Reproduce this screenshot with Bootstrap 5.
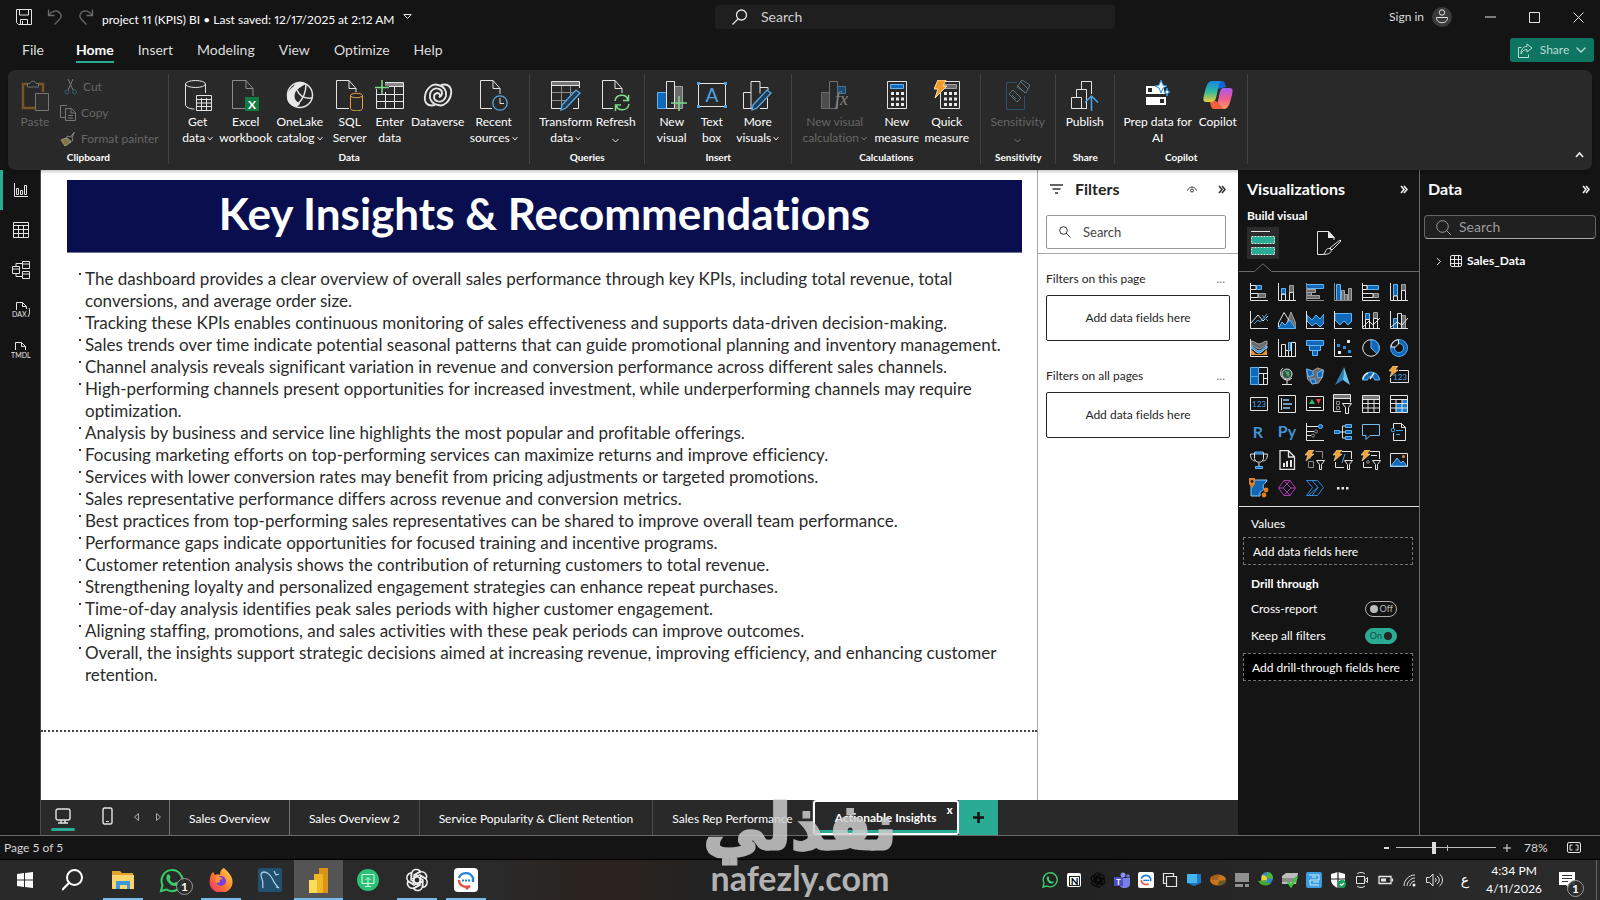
<!DOCTYPE html>
<html lang="en">
<head>
<meta charset="utf-8">
<meta name="viewport" content="width=device-width, initial-scale=1">
<title>project 11 (KPIS) BI</title>
<link rel="stylesheet" href="https://cdn.jsdelivr.net/npm/bootstrap@5.3.0/dist/css/bootstrap.min.css">
<style>
:root{--chrome:#141414;--ribbon:#292929;--accent:#2aac94;--line:#6a6a6a}
body{font-family:Lato,"Noto Sans",sans-serif;font-variant-ligatures:none;font-size:12px;line-height:16px;background:var(--chrome);color:#fff;min-height:100vh}
button,input{font:inherit;font-variant-ligatures:none;color:inherit}
button{background:none;border:0;padding:0}
svg{display:block;flex:none}
h1,h2,h3,p{margin:0}
.ln{fill:none;stroke:#e4e4e4}
.bl{fill:#0f68b8;stroke:#62b4f4}
.bo{fill:none;stroke:#4ea3e4}
.gr{fill:#6b6b6b;stroke:#a2a2a2}
.go{fill:none;stroke:#8d8d8d}
.wf{fill:#e8e8e8}

/* title bar */
.titlebar{height:34px}
.titlebar .before{flex:715 1 0}
.titlebar .after{flex:485 1 0}
.quick{gap:15px;padding:0 8px 0 16px}
.doc-name{padding-top:6px}
.doc-name,.clock{font-variant-numeric:proportional-nums}
.find{width:400px;height:24px;background:#1f1f1f;border-radius:3px;padding:0 17px;gap:11px}
.find input{background:none;border:0;outline:0;font-size:14px;color:#d0d0d0}
.find input::placeholder{color:#d0d0d0;opacity:1}
.winbtn{width:44px;height:34px}

/* menu */
.menu{height:36px;padding-left:22px;padding-right:6px}
.menu a{color:#dcdcdc;text-decoration:none;font-size:14px;line-height:20px;padding:6px 0 1px;border-bottom:2px solid transparent;height:29px}
.menu a.on{color:#fff;font-weight:700;border-color:var(--accent)}
.share{background:#0e7562;color:#b8dcd4;border-radius:3px;width:84px;height:24px;margin-top:4px;gap:7px}

/* ribbon */
.ribbon{background:var(--ribbon);border-radius:7px;height:100px;margin:0 8px;position:relative;z-index:2;box-shadow:0 2px 3px #0003}
.rgroup{padding:0 7px 0 6px;position:relative}
.rgroup::after{content:"";position:absolute;right:0;top:4px;bottom:6px;width:1px;background:#414141}
.rgroup h2{font-size:10px;line-height:14px;font-weight:700;position:absolute;left:0;right:0;bottom:6px;text-align:center}
.g-clip{padding-right:10px}
.g-data{padding-right:9px}
.g-query{padding-left:9px;padding-right:6px}
.g-calc{padding-right:9px}
.rbtn{display:flex;flex-direction:column;align-items:center;padding-top:10px;height:80px;line-height:16px;white-space:nowrap}
.rbtn svg{margin-bottom:3px}
.rbtn svg.cv,.cv{display:inline-block;margin:0 0 1px 2px}
.col38{width:38px}.col42{width:42px}.col46{width:46px}.col50{width:50px}.col54{width:54px}.col58{width:58px}.col62{width:62px}.col74{width:74px}
.dim{color:#666}
.small-cmd{gap:5px;color:#666;height:26px}

/* work area */
.rail{width:41px;border-right:1px solid #4a4a4a}
.rail button{width:40px;height:40px;border-left:3px solid transparent;padding:0 2px 0 0}
.rail button.on{border-color:var(--accent)}
.report{background:#fff;color:#2b2b2b;min-width:0}
.banner{background:#090f4e;color:#fff;margin:10px 15px 0 26px;height:73px;border-bottom:1px solid #6b6f9a;font-size:44px;line-height:66px;font-weight:700;text-align:center}
.insights{list-style:none;margin:15px 20px 0 37px;padding:0;font-size:17px;line-height:22px}
.insights li{padding-left:7px;position:relative}
.insights li::before{content:"";position:absolute;left:1px;top:5px;width:2px;height:2px;background:#333}
.page-edge{border-top:2px dotted #444;margin-bottom:68px}
.filters{width:201px;background:#fff;color:#252423;border-left:1px solid #a8a8a8}
.filters .top{border-bottom:1px solid #a8a8a8;height:84px;padding:9px 12px 0 8px}
.filters h2,.pane h2{font-size:16px;line-height:20px;font-weight:700}
.fsearch{border:1px solid #999;border-radius:2px;height:34px;margin-top:16px;padding:0 12px;gap:10px;width:180px}
.fsearch input{border:0;outline:0;width:100%;background:none;font-size:13px}
.fsearch input::placeholder{color:#444;opacity:1}
.drop{border:1px solid #252423;border-radius:2px;height:46px;width:184px}
.pane{width:182px;border-right:1px solid var(--line)}
.pane.data{width:180px}
.tiles{display:grid;grid-template-columns:repeat(6,28px);grid-auto-rows:28px;padding:5px 0 4px 6px;border-bottom:1px solid #e0e0e0}
.tiles button{display:flex;align-items:center;justify-content:center}
.well{border:1px dashed #767676;height:28px;line-height:28px;margin:0 6px 0 4px;white-space:nowrap}
.switch-box{position:relative;width:32px;height:16px}
.switch-box input{appearance:none;display:block;margin:0;width:32px;height:16px;border:1px solid #b0b0b0;border-radius:8px}
.switch-box input::before{content:"";display:block;width:8px;height:8px;border-radius:4px;background:#bdbdbd;margin:3px 0 0 4px}
.switch-box input:checked{background:var(--accent);border-color:var(--accent)}
.switch-box input:checked::before{background:#252525;margin-left:18px}
.switch-box span{position:absolute;font-size:9px;line-height:16px;top:0;right:4px;color:#bdbdbd;pointer-events:none}
.switch-box input:checked+span{right:15px;color:#114d43}
.dsearch{height:24px;border:1px solid #666;border-bottom-color:#aaa;border-radius:4px;background:#202020;margin:16px 4px 0;padding:0 11px;gap:6px}
.dsearch input{border:0;outline:0;background:none;width:120px;font-size:14px}
.dsearch input::placeholder{color:#9c9c9c;opacity:1}

/* page tabs */
.sheets{background:var(--ribbon);height:35px}
.sheets .tab{border-right:1px solid #4d4d4d;height:35px;padding:3px 19px 0;white-space:nowrap}
.sheets .tab.on{border:2px solid #fff;border-radius:3px;box-shadow:inset 0 -3px var(--accent);font-weight:700;padding:0 18px;position:relative;width:146px}
.sheets .tab.on b{position:absolute;right:4px;top:0;font-size:11px}
.addtab{background:var(--accent);width:39px;color:#111}
.view{width:44px;height:35px;position:relative}
.view.on::after{content:"";position:absolute;left:10px;right:10px;bottom:4px;height:3px;border-radius:2px;background:var(--accent)}
.status{height:25px;border-top:1px solid var(--line);border-bottom:1px solid #000;background:var(--chrome);color:#d6d6d6}
.zoomer{appearance:none;width:100px;height:12px;margin:0 7px;background:linear-gradient(#bbb,#bbb) 51px 3px/1px 6px no-repeat,linear-gradient(#bbb,#bbb) 0 5px/100% 1px no-repeat}
.zoomer::-webkit-slider-thumb{appearance:none;width:4px;height:12px;background:#ddd}

/* task bar */
.taskbar{height:40px;background:linear-gradient(90deg,#292929,#2a2a2a 31%,#2a231f 36%,#2a231f 40%,#222 44%,#222 62%,#2b2b2b)}
.taskbar .app{width:49px;height:40px;position:relative;display:flex;align-items:center;justify-content:center}
.taskbar .run::after{content:"";position:absolute;left:5px;right:4px;bottom:0;height:2px;background:#76b9ed}
.taskbar .now{background:#545454}
.taskbar .now::after{left:0;right:0}
.tray{gap:8px}
.bubble{position:absolute;width:17px;height:17px;border:1px solid #9a9a9a;border-radius:9px;background:#2b2b2be6;font-size:12px;line-height:15px;text-align:center;font-weight:700}
.clock{line-height:18px;width:62px;text-align:center}

.watermark{position:absolute;left:700px;top:788px;width:200px;color:#ccc;opacity:.85;text-align:center;z-index:9;pointer-events:none;font-weight:700}
.watermark .ar{font:700 63px/80px "DejaVu Sans",sans-serif;height:70px;white-space:nowrap;-webkit-text-stroke:3px #ccc}
.watermark .en{font-size:34px;line-height:40px;height:40px}
</style>
</head>
<body class="d-flex flex-column position-relative overflow-hidden">

<header>
  <div class="titlebar d-flex align-items-center">
    <div class="before d-flex align-items-center">
      <div class="quick d-flex">
        <button aria-label="Save"><svg width="16" height="16"><path class="ln" d="M.5.5h15v15h-13l-2-2zM4.500 15.500v-5h7v5M3.500.5v5.500h9v-5.500M6.500 15v-3"/></svg></button>
        <button aria-label="Undo"><svg width="16" height="16"><path fill="none" stroke="#6a6a6a" stroke-width="1.300" d="M1.500.5v6h6M1.500 6.500C5 1.500 10 1 12.500 3.500s2 5-.5 7.500l-4.500 4.500"/></svg></button>
        <button aria-label="Redo"><svg width="16" height="16"><path fill="none" stroke="#6a6a6a" stroke-width="1.300" d="M14.500.5v6h-6M14.500 6.500C11 1.500 6 1 3.500 3.500s-2 5 .5 7.500l4.500 4.500"/></svg></button>
      </div>
      <span class="doc-name">project 11 (KPIS) BI • Last saved: 12/17/2025 at 2:12 AM</span>
      <button aria-label="File details" class="ms-2"><svg width="9" height="6"><path class="ln" d="M.8.5h7.400l-3.700 4z"/></svg></button>
    </div>
    <label class="find d-flex align-items-center">
      <svg width="16" height="16"><circle class="ln" stroke-width="1.300" cx="9.500" cy="6" r="5"/><path class="ln" stroke-width="1.300" d="M6 10l-5.500 5.500"/></svg>
      <input type="text" placeholder="Search" aria-label="Search">
    </label>
    <div class="after d-flex align-items-center justify-content-end">
      <a href="#" class="text-decoration-none me-2" style="color:#dcdcdc">Sign in</a>
      <svg class="me-3" width="20" height="20"><circle cx="10" cy="10" r="10" fill="#3b3b3b"/><circle class="ln" cx="10" cy="5.500" r="2.700"/><path class="ln" d="M4.500 10.500h11c.5 7-11.500 7-11 0z"/></svg>
      <button class="winbtn d-flex align-items-center justify-content-center" aria-label="Minimize"><svg width="11" height="2"><path class="ln" d="M0 1h11"/></svg></button>
      <button class="winbtn d-flex align-items-center justify-content-center" aria-label="Maximize"><svg width="11" height="11"><path class="ln" d="M.5.5h10v10h-10z"/></svg></button>
      <button class="winbtn d-flex align-items-center justify-content-center" aria-label="Close"><svg width="11" height="11"><path class="ln" d="M.5.5l10 10M10.500.5l-10 10"/></svg></button>
    </div>
  </div>
  <nav class="menu d-flex">
    <a href="#" class="me-3">File</a><a href="#" class="on ms-3">Home</a><a href="#" class="ms-4">Insert</a><a href="#" class="ms-4">Modeling</a><a href="#" class="ms-4">View</a><a href="#" class="ms-4">Optimize</a><a href="#" class="ms-4">Help</a>
    <button class="share d-flex align-items-center justify-content-center ms-auto"><svg width="15" height="15"><path fill="none" stroke="#b8dcd4" d="M3.500 4.500h-3v10h10v-3M9 1l5 4-5 4V6.500C6 6.500 4 8 3 11c0-4.500 2-7.500 6-7.500z"/></svg>Share<svg width="10" height="6"><path fill="none" stroke="#b8dcd4" stroke-width="1.300" d="M.5.5L5 5 9.500.5"/></svg></button>
  </nav>
</header>

<section class="ribbon d-flex" aria-label="Home ribbon">
  <div class="rgroup g-clip d-flex dim">
    <button class="rbtn dim col42"><svg width="29" height="31"><path d="M7 4H2v24h12M17 4h5v8" fill="none" stroke="#7a5427" stroke-width="2.500"/><path d="M6.500 7V3.500H9c.5-3 5.500-3 6 0h2.500V7z" fill="none" stroke="#707070"/><path d="M14.500 13.500h13v17h-13z" fill="#2e2e2e" stroke="#777"/></svg>Paste</button>
    <div class="ps-1">
      <button class="small-cmd d-flex align-items-center mt-1"><svg width="14" height="16" class="ms-1"><path d="M4 0l5 11M9 0L4 11" fill="none" stroke="#808080"/><circle cx="3" cy="13" r="2" fill="none" stroke="#326078"/><circle cx="10.500" cy="13" r="2" fill="none" stroke="#326078"/></svg>Cut</button>
      <button class="small-cmd d-flex align-items-center"><svg width="16" height="16"><path d="M5 12.500H.5v-12H7M5.500 3.500h6l4 4v8h-10zM11 4v4h4M8 10.500h5M8 13h5" fill="none" stroke="#777"/></svg>Copy</button>
      <button class="small-cmd d-flex align-items-center"><svg width="16" height="16"><path d="M14.500 1l-4 5-3-1-1 1.500 5 4L13 9l-1-2.500z" fill="none" stroke="#888"/><path d="M6 7L1 9l4 6 6-4z" fill="#857544" stroke="#9b9b7b"/></svg>Format painter</button>
    </div>
    <h2 class="text-white">Clipboard</h2>
  </div>
  <div class="rgroup g-data d-flex">
    <button class="rbtn col46"><svg width="28" height="31"><ellipse class="ln" cx="11.500" cy="4" rx="10" ry="3.500"/><path class="ln" d="M1.500 4v21c0 2 4 4 9 4M21.500 4v9"/><path d="M12 14.500h16v16H12z" fill="#292929"/><path class="ln" d="M12.500 15.500h15v15h-15zM12.500 19.500h15M12.500 23h15M12.500 26.500h15M17.500 18v12M22.500 18v12"/></svg><span>Get</span><span>data<svg class="cv" width="6" height="5"><path class="ln" d="M.5 1L3 4l2.500-3"/></svg></span></button>
    <button class="rbtn col50"><svg width="27" height="31"><path class="go" d="M13 28.500H.5V.5H14l7 8V16M14 .5v8h7"/><path fill="#107c41" d="M13 17h14v14H13z"/><text x="20" y="28.500" text-anchor="middle" font-size="12" font-weight="700" fill="#fff">X</text></svg><span>Excel</span><span>workbook</span></button>
    <button class="rbtn col58"><svg width="28" height="31"><circle class="ln" stroke-width="1.500" cx="14" cy="15" r="12.500"/><path class="wf" d="M20 4C15 0 9 2 8 6c-8 5-9 15-3 19 4 3 9 1 9-2-6-1-7-9-3-13 2-2 5-4 9-6z"/><path class="ln" stroke-width="1.500" d="M11 10c2 5 6 9 15 8M20 4c0 8-2 14-8 20"/></svg><span>OneLake</span><span>catalog<svg class="cv" width="6" height="5"><path class="ln" d="M.5 1L3 4l2.500-3"/></svg></span></button>
    <button class="rbtn col42"><svg width="28" height="31"><path class="ln" d="M13 28.500H.5V.5H13l7 8V12M13 .5v8h7"/><path d="M14.500 15.500v13c0 3 12 3 12 0v-13" fill="#292929" stroke="#e8a04c"/><ellipse cx="20.500" cy="15.500" rx="6" ry="2.200" fill="#292929" stroke="#e8a04c"/></svg><span>SQL</span><span>Server</span></button>
    <button class="rbtn col38"><svg width="29" height="31"><path fill="#888" d="M10 2h18v4H10z"/><path class="ln" d="M1.500 9v19.500h27V2.500H10M1.500 14.500h27M1.500 21.500h27M10.500 12v16.500M19.500 7v21.500M14 6.500h14"/><path fill="none" stroke="#7ddc8a" stroke-width="1.500" d="M7 0v14M0 7.500h14"/></svg><span>Enter</span><span>data</span></button>
    <button class="rbtn col58"><svg width="30" height="31"><g class="ln" stroke-width="1.900"><path d="M12 25C4 27 1 22 2 16 3 9 9 3 15 5c6 1 9 6 8 11-1 4-5 7-9 5-4-1-4-7 0-8 3 0 4 3 2 4"/><path d="M18 5c8-2 11 3 10 9-1 7-7 13-13 11-6-1-9-6-8-11 1-4 5-7 9-5 4 1 4 7 0 8"/></g></svg><span>Dataverse</span></button>
    <button class="rbtn col54"><svg width="28" height="31"><path class="ln" d="M12 28.500H.5V.5H13l7 8V14M13 .5v8h7"/><circle cx="20" cy="23" r="7.200" fill="#292929" stroke="#5aa9e2" stroke-width="1.300"/><path class="ln" d="M20 18v5.500h4"/></svg><span>Recent</span><span>sources<svg class="cv" width="6" height="5"><path class="ln" d="M.5 1L3 4l2.500-3"/></svg></span></button>
    <h2>Data</h2>
  </div>
  <div class="rgroup g-query d-flex">
    <button class="rbtn col54"><svg width="30" height="31"><path fill="#777" d="M1 1h27v4H1z"/><path class="go" d="M1 12.500h24M1 20.500h20M10.500 5v23M19.500 5v18"/><path class="ln" d="M28.500 8V1.500H.5v27h10M.5 5.500h28M27.500 18v10.500H22"/><path d="M11 25L25 10l4 3-14 15-5 2z" fill="#1d3f5c" stroke="#5aa9e2" stroke-width="1.300"/></svg><span>Transform</span><span>data<svg class="cv" width="6" height="5"><path class="ln" d="M.5 1L3 4l2.500-3"/></svg></span></button>
    <button class="rbtn col46"><svg width="28" height="31"><path class="ln" d="M11 28.500H.5V.5H13l7 8V13M13 .5v8h7"/><path d="M13 21c1-7 11-8 13-1M26.500 15v5.500H21M27 24c-1 7-11 8-13 1M13.500 31v-6H19" fill="none" stroke="#7ddc8a" stroke-width="1.500"/></svg><span>Refresh</span><svg class="mt-2" width="7" height="5"><path class="ln" d="M.5 1l3 3 3-3"/></svg></button>
    <h2>Queries</h2>
  </div>
  <div class="rgroup d-flex">
    <button class="rbtn col42"><svg width="30" height="31"><path class="bl" d="M.5 12.500h9v16h-9z"/><path class="gr" d="M17.500 6.500h8v22h-8z"/><path d="M9.500 1.500h8v27h-8z" fill="#292929" stroke="#e4e4e4"/><path fill="none" stroke="#7ddc8a" stroke-width="1.500" d="M22 16v15M14 23h16"/></svg><span>New</span><span>visual</span></button>
    <button class="rbtn col38"><svg width="32" height="31"><path class="ln" d="M2.500 3.500h27v23h-27z"/><path fill="#4ea3e4" d="M1 2h3v3H1zM28 2h3v3h-3zM1 25h3v3H1zM28 25h3v3h-3z"/><text x="16" y="22" text-anchor="middle" font-size="19" fill="#4ea3e4">A</text></svg><span>Text</span><span>box</span></button>
    <button class="rbtn col54"><svg width="30" height="31"><path class="ln" d="M8 12.500H.5v16H8V1.500h9v12M17 7.500h8V10M24.500 18v10.500H17M8 28.500h4"/><path d="M10 25L24 10l4 3-14 15-5 2z" fill="#1d3f5c" stroke="#5aa9e2" stroke-width="1.300"/></svg><span>More</span><span>visuals<svg class="cv" width="6" height="5"><path class="ln" d="M.5 1L3 4l2.500-3"/></svg></span></button>
    <h2>Insert</h2>
  </div>
  <div class="rgroup g-calc d-flex">
    <button class="rbtn dim col74"><svg width="30" height="31" opacity=".55"><path class="gr" d="M1.500 12.500h8v16h-8z"/><path d="M9.500 1.500h8v27h-8z" fill="#292929" stroke="#aaa"/><path class="bl" d="M17.500 6.500h8v7h-8z"/><text x="15" y="25" font-family="Liberation Serif" font-style="italic" font-size="18" fill="#ccc">fx</text></svg><span>New visual</span><span>calculation<svg class="cv" width="6" height="5"><path fill="none" stroke="#777" d="M.5 1L3 4l2.500-3"/></svg></span></button>
    <button class="rbtn col50"><svg width="20" height="31"><path class="ln" d="M.5 1.500h19v27H.5z"/><path class="bl" d="M3.500 4.500h13v4h-13z"/><path class="wf" d="M4 12h3v3H4zM9 12h3v3H9zM14 12h3v3h-3zM4 17.500h3v3H4zM9 17.500h3v3H9zM14 17.500h3v3h-3zM4 23h3v3H4zM9 23h3v3H9zM14 23h3v3h-3z"/></svg><span>New</span><span>measure</span></button>
    <button class="rbtn col50"><svg width="26" height="31"><path class="ln" d="M6.500 1.500h19v27h-19z"/><path class="gr" d="M10.500 4.500h12v4h-12z"/><path class="wf" d="M10 12h3v3h-3zM15 12h3v3h-3zM20 12h3v3h-3zM10 17.500h3v3h-3zM15 17.500h3v3h-3zM20 17.500h3v3h-3zM10 23h3v3h-3zM15 23h3v3h-3zM20 23h3v3h-3z"/><path d="M4 0h8L9 6h4L1 18l3-9H0z" fill="#f09a28" stroke="#ffe0a8"/></svg><span>Quick</span><span>measure</span></button>
    <h2>Calculations</h2>
  </div>
  <div class="rgroup d-flex">
    <button class="rbtn dim col62"><svg width="28" height="31" opacity=".6"><path fill="none" stroke="#2f6c92" d="M13 2.500H2.500v27h18V16"/><path fill="none" stroke="#7fa3b8" d="M16 1l8 8M13 5l8 8M18 0l8 5-4 8-9-6zM5 14l4-4 8 8-4 4z"/><path stroke="#7fa3b8" d="M8 15l4 4"/></svg><span>Sensitivity</span><svg class="mt-2" width="7" height="5"><path fill="none" stroke="#777" d="M.5 1l3 3 3-3"/></svg></button>
    <h2>Sensitivity</h2>
  </div>
  <div class="rgroup d-flex">
    <button class="rbtn col46"><svg width="28" height="31"><path class="ln" d="M16 28.500H.5v-11h10v11M5.500 17V9.500h10v19M10.500 9V1.500h10V14"/><path fill="none" stroke="#4ea3e4" stroke-width="1.500" d="M20.500 31V16M14 22.500l6.500-6.500 6.500 6.500"/></svg><span>Publish</span></button>
    <h2>Share</h2>
  </div>
  <div class="rgroup d-flex">
    <button class="rbtn col74"><svg width="25" height="31"><path fill="#fff" d="M1 6h17l2 8H1zM1 17h20v8H1z"/><path d="M3 8h4v4H3zM15 19h4v4h-4z" fill="#292929"/><path fill="#e9f6ff" stroke="#2d8fd8" d="M16 0l2 5 4 1-4 2-2 5-2-5-4-2 4-1zM22 8l1 3 2 1-2 1-1 3-1-3-2-1 2-1z"/></svg><span>Prep data for</span><span>AI</span></button>
    <button class="rbtn col46"><svg width="30" height="31"><defs><linearGradient id="ca" x1="0" y1="0" x2="0" y2="1"><stop offset="0" stop-color="#1786e8"/><stop offset=".5" stop-color="#2cb9a0"/><stop offset="1" stop-color="#f2cc34"/></linearGradient><linearGradient id="cb" x1="0" y1="0" x2="0" y2="1"><stop offset="0" stop-color="#a35cf0"/><stop offset=".5" stop-color="#ef5a93"/><stop offset="1" stop-color="#ff9c5c"/></linearGradient></defs><path fill="#1464d2" d="M9 1h10c3 0 3 3 4 6l-8 2z"/><path fill="url(#ca)" d="M9 1h9c-4 3-3 20-8 21H3c-3 0-3-3-2-7C3 8 4 1 9 1z"/><path fill="url(#cb)" d="M21 29h-9c4-3 3-20 8-21h7c3 0 3 3 2 7-2 7-3 14-8 14z"/><path fill="#f2603c" d="M21 29H11c-3 0-3-3-4-7l6-1z"/></svg><span>Copilot</span></button>
    <h2>Copilot</h2>
  </div>
  <button class="ms-auto align-self-end me-2 mb-2 pb-1" aria-label="Collapse ribbon"><svg width="9" height="6"><path class="ln" stroke-width="1.800" d="M1 5l3.500-4L8 5"/></svg></button>
</section>

<main class="d-flex flex-grow-1">
  <nav class="rail d-flex flex-column" aria-label="Views">
    <button class="on d-flex align-items-center justify-content-center" aria-label="Report view"><svg width="14" height="14"><path class="ln" d="M.5 0v13.500H14M2.500 5.500h2v6h-2zM6.500 7.500h2v4h-2zM10.500 2.500h2v9h-2z"/></svg></button>
    <button class="d-flex align-items-center justify-content-center" aria-label="Table view"><svg width="16" height="16"><path class="ln" d="M.5.5h15v15H.5zM.5 3.500h15M.5 7.500h15M.5 11.500h15M5.500 3.500v12M10.500 3.500v12"/></svg></button>
    <button class="d-flex align-items-center justify-content-center" aria-label="Model view"><svg width="18" height="18"><path class="ln" d="M10.500.5h7v7h-7zM10.500 3h7M10.500 10.500h7v7h-7zM10.500 13h7M.5 5.500h7v7h-7zM.5 8h7M4 5V2.500h6M4 13v2.500h6"/></svg></button>
    <button class="d-flex align-items-center justify-content-center" aria-label="DAX query view"><svg width="18" height="18"><path class="ln" d="M4.500 9V1.500h6l4 4V8M10.500 1.500v4h4M17 7c1 2 1 6-1 9"/><text x="0" y="16" font-size="7" fill="#e4e4e4">DAX</text></svg></button>
    <button class="d-flex align-items-center justify-content-center" aria-label="TMDL view"><svg width="20" height="18"><path class="ln" d="M4.500 9V1.500h6l4 4V9M10.500 1.500v4h4"/><text x="0" y="17" font-size="7" fill="#e4e4e4">TMDL</text></svg></button>
  </nav>

  <div class="d-flex flex-column flex-grow-1" style="min-width:0">
    <div class="d-flex flex-grow-1">
      <article class="report d-flex flex-column flex-grow-1">
        <h1 class="banner">Key Insights &amp; Recommendations</h1>
        <ul class="insights">
          <li>The dashboard provides a clear overview of overall sales performance through key KPIs, including total revenue, total conversions, and average order size.</li>
          <li>Tracking these KPIs enables continuous monitoring of sales effectiveness and supports data-driven decision-making.</li>
          <li>Sales trends over time indicate potential seasonal patterns that can guide promotional planning and inventory management.</li>
          <li>Channel analysis reveals significant variation in revenue and conversion performance across different sales channels.</li>
          <li>High-performing channels present opportunities for increased investment, while underperforming channels may require optimization.</li>
          <li>Analysis by business and service line highlights the most popular and profitable offerings.</li>
          <li>Focusing marketing efforts on top-performing services can maximize returns and improve efficiency.</li>
          <li>Services with lower conversion rates may benefit from pricing adjustments or targeted promotions.</li>
          <li>Sales representative performance differs across revenue and conversion metrics.</li>
          <li>Best practices from top-performing sales representatives can be shared to improve overall team performance.</li>
          <li>Performance gaps indicate opportunities for focused training and incentive programs.</li>
          <li>Customer retention analysis shows the contribution of returning customers to total revenue.</li>
          <li>Strengthening loyalty and personalized engagement strategies can enhance repeat purchases.</li>
          <li>Time-of-day analysis identifies peak sales periods with higher customer engagement.</li>
          <li>Aligning staffing, promotions, and sales activities with these peak periods can improve outcomes.</li>
          <li>Overall, the insights support strategic decisions aimed at increasing revenue, improving efficiency, and enhancing customer retention.</li>
        </ul>
        <div class="page-edge mt-auto"></div>
      </article>
      <aside class="filters flex-shrink-0">
        <div class="top">
          <div class="d-flex align-items-center">
            <svg class="ms-1 me-3" width="13" height="10"><path stroke="#333" stroke-width="1.300" d="M0 1h13M2.500 5h8M5 9h3"/></svg>
            <h2 style="margin-left:-4px">Filters</h2>
            <button class="ms-auto" style="margin-right:21px" aria-label="Hide filters"><svg width="10" height="7"><path fill="none" stroke="#333" d="M.5 4.500C2 0 8 0 9.500 4.500"/><circle cx="5" cy="4.500" r="1.500" fill="none" stroke="#333"/></svg></button>
            <button aria-label="Collapse filters"><svg width="8" height="9"><path fill="none" stroke="#333" stroke-width="1.600" d="M1 1l3 3.500-3 3.500M4 1l3 3.500-3 3.500"/></svg></button>
          </div>
          <label class="fsearch d-flex align-items-center"><svg width="12" height="12"><circle cx="4.500" cy="4.500" r="3.800" fill="none" stroke="#333"/><path stroke="#333" d="M7 7l4.500 4.500"/></svg><input type="text" placeholder="Search" aria-label="Search filters"></label>
        </div>
        <div class="ps-2" style="padding-top:17px">
          <div class="d-flex justify-content-between mb-2" style="padding-right:13px"><span>Filters on this page</span><button class="text-secondary" aria-label="Page filter options">...</button></div>
          <div class="drop d-flex align-items-center justify-content-center">Add data fields here</div>
          <div class="d-flex justify-content-between mb-2" style="margin-top:27px;padding-right:13px"><span>Filters on all pages</span><button class="text-secondary" aria-label="Report filter options">...</button></div>
          <div class="drop d-flex align-items-center justify-content-center">Add data fields here</div>
        </div>
      </aside>
    </div>
    <nav class="sheets d-flex" aria-label="Pages">
      <button class="view on d-flex align-items-center justify-content-center pb-1" aria-label="Desktop layout"><svg width="16" height="16"><rect class="ln" stroke-width="1.400" x="1" y="1" width="14" height="11" rx="2"/><path class="ln" stroke-width="1.400" d="M6 12v3M10 12v3M3 15h10"/></svg></button>
      <button class="view d-flex align-items-center justify-content-center pb-1" aria-label="Mobile layout"><svg width="11" height="18"><rect class="ln" stroke-width="1.400" x="1" y="1" width="9" height="16" rx="1.500"/><path class="ln" d="M4 14.500h3"/></svg></button>
      <button class="ms-1" aria-label="Previous page"><svg width="8" height="9"><path fill="none" stroke="#aaa" d="M5.500.5v7l-4-3.500z"/></svg></button>
      <button style="margin:0 7px 0 15px" aria-label="Next page"><svg width="6" height="9"><path fill="none" stroke="#aaa" d="M.5.5v7l4-3.500z"/></svg></button>
      <button class="tab border-start border-secondary">Sales Overview</button>
      <button class="tab">Sales Overview 2</button>
      <button class="tab">Service Popularity &amp; Client Retention</button>
      <button class="tab">Sales Rep Performance</button>
      <button class="tab on">Actionable Insights<b>x</b></button>
      <button class="addtab d-flex align-items-center justify-content-center" aria-label="New page"><svg width="11" height="11"><path stroke="#111" stroke-width="2.600" d="M5.500 0v11M0 5.500h11"/></svg></button>
    </nav>
  </div>

  <aside class="pane flex-shrink-0" style="border-left:1px solid var(--chrome)">
    <div class="d-flex align-items-center ps-2" style="padding-top:9px;padding-right:11px">
      <h2>Visualizations</h2>
      <button class="ms-auto" aria-label="Collapse visualizations"><svg width="8" height="9"><path fill="none" stroke="#eee" stroke-width="1.600" d="M1 1l3 3.500-3 3.500M4 1l3 3.500-3 3.500"/></svg></button>
    </div>
    <h3 class="ps-2" style="font-size:12px;line-height:16px;font-weight:700;margin-top:9px">Build visual</h3>
    <div class="d-flex ps-2" style="margin-top:3px">
      <button style="background:#2b2b2b;padding:4px" aria-label="Build visual"><svg width="24" height="24"><path class="ln" d="M0 .5h19"/><path fill="#2aac94" stroke="#cfeee7" stroke-dasharray="2 1" d="M.5 5.500h23v7H.5zM.5 16.500h23v7H.5z"/></svg></button>
      <button style="padding:4px;margin-left:34px" aria-label="Format visual"><svg width="24" height="24"><path class="ln" d="M6 23.500H.5V.5H12l5 6V9"/><path class="wf" d="M11 0v7h7z"/><path class="ln" d="M6 23.500c3-1 2-7 7-6 3 3 0 6-7 6zM13 17L23 9l1 1-9 9z"/></svg></button>
    </div>
    <svg width="180" height="10" class="mt-1"><path fill="none" stroke="#6a6a6a" d="M0 8.500h15.500L24 .8l8.500 7.700H180"/></svg>
    <div class="tiles">
      <button aria-label="Stacked bar chart"><svg width="18" height="18"><path class="bl" d="M6.500 2.500h5v4h-5z"/><path class="gr" d="M8.500 10.500h7v4h-7z"/><path class="ln" d="M.5 0v17.500H18M1 2.500h5v4H1M1 10.500h7v4H1"/></svg></button>
      <button aria-label="Stacked column chart"><svg width="18" height="18"><path class="bl" d="M3.500 5.500h4v6h-4z"/><path class="gr" d="M11.500 2.500h4v7h-4z"/><path class="ln" d="M.5 0v17.500H18M3.500 17v-6h4v6M11.500 17V9.500h4V17"/></svg></button>
      <button aria-label="Clustered bar chart"><svg width="18" height="18"><path class="bl" d="M.5 1.500h17v4H.5z"/><path class="gr" d="M.5 6.500h9v3h-9zM.5 9.500h5v3h-5zM.5 12.500h13v3H.5z"/><path class="go" d="M.5 0v17.500H18"/></svg></button>
      <button aria-label="Clustered column chart"><svg width="18" height="18"><path class="bl" d="M2.500 1.500h4v16h-4z"/><path class="gr" d="M7.500 7.500h3v10h-3zM10.500 11.500h3v6h-3zM14.500 5.500h3v12h-3z"/><path class="go" d="M.5 0v17.500H18"/></svg></button>
      <button aria-label="100% stacked bar chart"><svg width="18" height="18"><path class="bl" d="M5.500 2.500h11v4h-11z"/><path class="gr" d="M11.500 10.500h5v4h-5z"/><path class="ln" d="M.5 0v17.500H18M1 2.500h4v4H1M1 10.500h10v4H1"/></svg></button>
      <button aria-label="100% stacked column chart"><svg width="18" height="18"><path class="bl" d="M3.500 1.500h4v11h-4z"/><path class="gr" d="M11.500 1.500h4v6h-4z"/><path class="ln" d="M.5 0v17.500H18M3.500 17v-4h4v4M11.500 17V7.500h4V17"/></svg></button>

      <button aria-label="Line chart"><svg width="18" height="18"><path class="ln" d="M.5 0v17.500H18M1 12l7-8 5 6 5-5"/><path class="bo" d="M4 13l4-4 2 2 7-8M12 4l6 6"/></svg></button>
      <button aria-label="Area chart"><svg width="18" height="18"><path class="gr" d="M7 17L13 1l5 12v4z"/><path class="ln" d="M.5 16V12L6 1.500 12 11"/><path class="bl" d="M.5 17.500L4 11l3 3 5-5 5.500 8.500z"/></svg></button>
      <button aria-label="Stacked area chart"><svg width="18" height="18"><path class="bl" d="M1 4l5 5 4-5 4 4 4-5v9l-4 4-4-4-4 3-5-5z"/><path class="ln" d="M.5 0v17.500H18"/></svg></button>
      <button aria-label="100% stacked area chart"><svg width="18" height="18"><path class="bl" d="M1 2.500h16.500v8L14 14l-4-4-4 4-5-5z"/><path class="ln" d="M.5 0v17.500H18"/></svg></button>
      <button aria-label="Line and stacked column chart"><svg width="18" height="18"><path class="bl" d="M3.500 2.500h4v6h-4z"/><path class="gr" d="M11.500 1.500h4v6h-4z"/><path class="ln" d="M.5 0v17.500H18M3.500 17V8.500h4V17M11.500 17V7.500h4V17M1 16l6-6 4 4 7-7"/></svg></button>
      <button aria-label="Line and clustered column chart"><svg width="18" height="18"><path class="bl" d="M3.500 7.500h4v10h-4z"/><path class="gr" d="M11.500 4.500h4v13h-4z"/><path class="ln" d="M.5 0v17.500H18M7.500 17V2.500h4V17M1 16l6-5 5 3 6-7"/></svg></button>

      <button aria-label="Ribbon chart"><svg width="18" height="18"><path fill="#e89133" d="M1 10l5 5h6l5-5v6H1z"/><path class="gr" d="M1 2c4 0 5 3 8 3s5-3 8-3v4c-4 0-5 4-8 4s-4-4-8-4z"/><path fill="#3a8edb" stroke="#9ad0fa" d="M1 7c4 1 5 5 8 5s4-4 8-5v2c-3 1-5 5-8 5s-5-4-8-5z"/><path class="ln" d="M.5 0v17.500H18"/></svg></button>
      <button aria-label="Waterfall chart"><svg width="18" height="18"><path class="ln" d="M.5 0v17.500H18M3.500 17V5.500h4V17M7.500 11.500h3V17M13.500 17V3.500h4V17"/><path class="bl" d="M10.500 3.500h2v8h-2z"/></svg></button>
      <button aria-label="Funnel"><svg width="18" height="18"><path class="bl" d="M.5 1.500h17v5H.5zM3.500 6.500h11v5h-11zM6.500 11.500h5v5h-5z"/></svg></button>
      <button aria-label="Scatter chart"><svg width="18" height="18"><path class="ln" d="M.5 0v17.500H18"/><path fill="#2a8be0" d="M3 5h3v3H3zM9 7h3v3H9zM14 11h3v3h-3z"/><path class="wf" d="M13 1h3v3h-3zM4 12h3v3H4z"/></svg></button>
      <button aria-label="Pie chart"><svg width="18" height="18"><circle class="ln" cx="9" cy="9" r="8.300"/><path class="bl" d="M9 .7a8.300 8.300 0 0 1 6 14L9 9z"/></svg></button>
      <button aria-label="Donut chart"><svg width="18" height="18"><circle cx="9" cy="9" r="6.500" fill="none" stroke="#62b4f4" stroke-width="5"/><circle cx="9" cy="9" r="6.500" fill="none" stroke="#0f68b8" stroke-width="3.400"/><path fill="#1b1b1b" stroke="#eee" d="M8.500.7A8 8 0 0 0 1 8h4.500l3-3z"/></svg></button>

      <button aria-label="Treemap"><svg width="18" height="18"><path class="bl" d="M.5.5h8v17h-8z"/><path class="bo" d="M.5 9.500h8"/><path class="ln" d="M9 .5h8.500v17H9M9 6.500h8.500M13.500 6.500v11M13.500 11.500h4"/></svg></button>
      <button aria-label="Map"><svg width="18" height="18"><circle cx="9" cy="7" r="5" fill="#2f5a45" stroke="#ddd"/><path fill="#55ad77" d="M7 4l4 1v5L9 8z"/><path class="ln" d="M5 1c-5 4-2 13 6 12l3-2M9 13v4M4 17.500h10"/></svg></button>
      <button aria-label="Filled map"><svg width="18" height="18"><path class="gr" d="M.5 2l6 2 5-3 6 2-1 7-4 6-6 1-5-5z"/><path class="bl" d="M.5 2l6 2 1 4-5 2zM11 6l6-3-1 7-4 1zM4 12h5l1 4-4 1z"/></svg></button>
      <button aria-label="Azure map"><svg width="18" height="18"><path fill="#2a7fb8" d="M10 0L1 18l8-5z"/><path fill="#6cc4ea" d="M10 0l6 18-7-5z"/></svg></button>
      <button aria-label="Gauge"><svg width="18" height="18"><path class="bl" d="M.5 13a8.500 8 0 0 1 17 0h-5a3.500 3.500 0 0 0-7 0z"/><path class="ln" stroke-width="1.500" d="M8 12l4-6M1 12a8 8 0 0 1 5-6"/></svg></button>
      <button aria-label="Card (new)"><svg width="20" height="20"><path class="ln" d="M10 4.500h9.500v12H1.500V12"/><text x="4" y="14" font-size="8" fill="#4ea3e4">123</text><path fill="#f0a030" stroke="#ffe3b0" stroke-width=".6" d="M4 0h5L6 4h3L1 11l2-6H0z"/></svg></button>

      <button aria-label="Card"><svg width="18" height="18"><path class="ln" d="M.5 2.500h17v13H.5z"/><text x="9" y="12" text-anchor="middle" font-size="8" fill="#4ea3e4">123</text></svg></button>
      <button aria-label="Multi-row card"><svg width="18" height="18"><path class="ln" d="M.5.500h17v17H.5zM3.500 3v12"/><path stroke="#8cc6f2" stroke-width="1.500" d="M5 5h6M5 9h9M5 13h7"/></svg></button>
      <button aria-label="KPI"><svg width="18" height="18"><path class="ln" d="M.5 1.500h17v14H.5zM3 12.500h12"/><path fill="#35b56a" d="M3 9l3-5 3 5z"/><path fill="#e64545" d="M10 4h5l-2.500 5z"/></svg></button>
      <button aria-label="Slicer"><svg width="20" height="20"><path fill="#777" d="M1 1h17v3H1z"/><path class="ln" d="M8 17.500H.500V.500h17V8M.500 4.500h17"/><path class="go" d="M3.500 7.500h3v3h-3zM3.500 12.500h3v3h-3z"/><path d="M9.500 9.500h9l-3 4v6h-3v-6z" fill="#141414" stroke="#eee"/></svg></button>
      <button aria-label="Table"><svg width="18" height="18"><path fill="#777" d="M1 1h16v3H1z"/><path class="ln" d="M.5.500h17v17H.500zM.5 4.500h17M.5 8.500h17M.5 13h17M6 4.500v13M12 4.500v13"/></svg></button>
      <button aria-label="Matrix"><svg width="18" height="18"><path fill="#1a7fd4" d="M6 9h12v9H6zM12 4h6v14h-6z"/><path class="ln" d="M.5.500h17v17H.500zM.5 4.500h17M.5 8.500h17M.5 13h17M6 4.500v13M12 4.500v13"/></svg></button>

      <button aria-label="R script visual"><svg width="18" height="18"><text x="8" y="15" text-anchor="middle" font-size="16" font-weight="700" fill="#3f93d6">R</text></svg></button>
      <button aria-label="Python visual"><svg width="24" height="20"><text x="12" y="15" text-anchor="middle" font-size="16" font-weight="700" fill="#3f93d6">Py</text></svg></button>
      <button aria-label="Key influencers"><svg width="18" height="18"><path class="ln" d="M.5 0v17.500H18M1 3.500h11M1 8.500h7M1 12.500h4"/><circle class="bl" cx="14.500" cy="3.500" r="2"/><circle class="go" cx="10" cy="8.500" r="1.500"/><circle class="go" cx="7" cy="12.500" r="1.500"/></svg></button>
      <button aria-label="Decomposition tree"><svg width="18" height="18"><path class="ln" d="M6 9h5M8.500 3v12M8.500 3H11M8.500 15H11"/><path class="bl" d="M.500 7.500h5v3h-5zM11.500 1.500h6v3h-6zM11.500 7.500h6v3h-6zM11.500 13.500h6v3h-6z"/></svg></button>
      <button aria-label="Q&amp;A"><svg width="18" height="18"><path fill="none" stroke="#74bdf0" d="M.5 1.500h17v11H8l-4 4v-4H.5z"/></svg></button>
      <button aria-label="Smart narrative"><svg width="18" height="18"><path class="ln" d="M3.500 5V.5h8l4 4v13h-12V10M11.500.5v4h4"/><circle class="bo" cx="3" cy="7" r="1.800"/><path class="bo" d="M6 7.500h7M6 11.500h4"/></svg></button>

      <button aria-label="Metrics"><svg width="18" height="18"><path class="ln" d="M4.500 1.500h9v6c-1 5-8 5-9 0zM4 3H.5c0 5 2 7 5 7M14 3h3.500c0 5-2 7-5 7M9 12v3"/><path class="bl" d="M5.500 15.500h7v2h-7zM5 1h8v2H5z"/></svg></button>
      <button aria-label="Paginated report"><svg width="18" height="20"><path class="ln" stroke-width="1.300" d="M2 .7h8.500l6 6v12.600H2zM10.500 1v6h6"/><path class="wf" d="M5 13h2v4H5zM8 11h2v6H8zM12 10h2v7h-2z"/></svg></button>
      <button aria-label="Button slicer"><svg width="20" height="20"><path class="go" d="M10.500 1.500h7v7M3.500 11.500h5v6h-5zM5 9V4"/><path class="ln" d="M11.500 10.500h8l-3 4v5h-2v-5z"/><path fill="#f0a030" stroke="#ffe3b0" stroke-width=".6" d="M4 0h5L6 4h3L1 11l2-6H0z"/></svg></button>
      <button aria-label="Text slicer"><svg width="20" height="20"><path class="ln" d="M9 1.500h9.500V9M2.500 12v5.500H11"/><path class="bo" d="M9 13l3-9"/><path class="ln" d="M11.500 10.500h8l-3 4v5h-2v-5z"/><path fill="#f0a030" stroke="#ffe3b0" stroke-width=".6" d="M4 0h5L6 4h3L1 11l2-6H0z"/></svg></button>
      <button aria-label="List slicer"><svg width="20" height="20"><path class="ln" d="M9 1.500h9.500V9M2.500 12v5.500H11M10 5.500h6"/><circle class="go" cx="7" cy="12" r="1.300"/><path class="ln" d="M11.500 10.500h8l-3 4v5h-2v-5z"/><path fill="#f0a030" stroke="#ffe3b0" stroke-width=".6" d="M4 0h5L6 4h3L1 11l2-6H0z"/></svg></button>
      <button aria-label="Image"><svg width="18" height="18"><path class="ln" d="M.5 2.500h17v13H.5z"/><path class="bl" d="M1 15l6-8 4 5 2-2 4 5z"/><circle cx="13.500" cy="5.500" r="1.500" fill="#e89133"/></svg></button>

      <button aria-label="ArcGIS Maps"><svg width="20" height="20"><path fill="#1268b8" stroke="#8fcaf5" d="M2 2h16c-1 4-4 3-4 7 2 3-1 4-3 5v4H2z"/><path fill="#e0801f" d="M0 0h6v6l-3 4-3-4z"/><circle cx="3" cy="3.500" r="1.400" fill="#222"/><circle cx="17" cy="12" r="2.400" fill="#e0801f"/><circle cx="15" cy="17" r="2.400" fill="#e0801f"/></svg></button>
      <button aria-label="Power Apps"><svg width="18" height="18"><path fill="none" stroke="#a63cb0" d="M6 1.500h6L17.500 9 12 16.500H6L.5 9zM6 1.500L9 5l3-3.500M6 16.500L9 13l3 3.500M9 5L5 9l4 4 4-4zM.5 9H5M13 9h4.500"/></svg></button>
      <button aria-label="Power Automate"><svg width="18" height="18"><path fill="none" stroke="#2a8be0" d="M.5 1.500h11l6 7-6 8H.500l6-8zM6 1.500l6 7-6 8M3 16l9-8"/></svg></button>
      <button aria-label="More visuals"><svg width="12" height="3"><path class="wf" d="M0 0h2.500v2.500H0zM4.500 0H7v2.500H4.500zM9 0h2.500v2.500H9z"/></svg></button>
    </div>
    <p style="padding:9px 0 5px 12px">Values</p>
    <div class="well mb-2" style="padding-left:9px">Add data fields here</div>
    <h3 style="font-size:12px;line-height:16px;font-weight:700;padding:3px 0 0 12px">Drill through</h3>
    <div class="d-flex justify-content-between" style="padding:9px 22px 0 12px"><label for="cross">Cross-report</label><span class="switch-box"><input type="checkbox" role="switch" id="cross"><span>Off</span></span></div>
    <div class="d-flex justify-content-between" style="padding:11px 22px 9px 12px"><label for="keep">Keep all filters</label><span class="switch-box"><input type="checkbox" role="switch" id="keep" checked><span>On</span></span></div>
    <div class="well ps-2 bg-black">Add drill-through fields here</div>
  </aside>

  <aside class="flex-shrink-0 pane data border-0">
    <div class="d-flex align-items-center ps-2" style="padding-top:9px;padding-right:10px">
      <h2>Data</h2>
      <button class="ms-auto" aria-label="Collapse data"><svg width="8" height="9"><path fill="none" stroke="#eee" stroke-width="1.600" d="M1 1l3 3.500-3 3.500M4 1l3 3.500-3 3.500"/></svg></button>
    </div>
    <label class="dsearch d-flex align-items-center"><svg width="15" height="15"><circle cx="6.500" cy="6.500" r="5.800" fill="none" stroke="#9c9c9c"/><path stroke="#9c9c9c" d="M11 11l4 4"/></svg><input type="text" placeholder="Search" aria-label="Search data"></label>
    <button class="d-flex align-items-center ms-3" style="margin-top:14px"><svg class="me-2" width="6" height="9"><path class="ln" d="M1 1l3.500 3.500L1 8"/></svg><svg width="12" height="12"><rect class="ln" x=".5" y=".5" width="11" height="11" rx="1.500"/><path class="ln" d="M4.500 0v12M8.500 0v12M0 4.500h12M0 8.500h12"/></svg><span class="fw-bold" style="margin-left:5px">Sales_Data</span></button>
  </aside>
</main>

<div class="status d-flex align-items-center">
  <span class="ps-1 flex-grow-1">Page 5 of 5</span>
  <svg width="5" height="2"><path fill="#ddd" d="M0 0h5v2H0z"/></svg>
  <input class="zoomer" type="range" min="0" max="100" value="38" aria-label="Zoom">
  <svg width="8" height="8"><path class="ln" d="M4 0v8M0 4h8"/></svg>
  <a href="#" class="text-decoration-none" style="color:inherit;width:43px;margin-left:13px">78%</a>
  <button style="margin-right:19px" aria-label="Fit to page"><svg width="14" height="11"><rect class="ln" x=".5" y=".5" width="13" height="10" rx="1.500"/><path class="ln" d="M5.500 3H3v5h2.500M8.500 3H11v5H8.500"/></svg></button>
</div>

<footer class="taskbar d-flex align-items-center">
  <button class="app" aria-label="Start"><svg width="16" height="16"><path fill="#fff" d="M0 2l7-1v6.500H0zM8 1l8-1v7.500H8zM0 8.500h7V15l-7-1zM8 8.500h8V16l-8-1z"/></svg></button>
  <button class="app" aria-label="Search"><svg width="24" height="22"><circle cx="12.500" cy="8.500" r="7.500" fill="none" stroke="#fff" stroke-width="2"/><path stroke="#fff" stroke-width="2.200" d="M7 14l-7 7"/></svg></button>
  <button class="app run" aria-label="File Explorer"><svg width="22" height="20"><path fill="#e0a32e" d="M0 1h8l2 2h11v5H0z"/><path fill="#fbd66c" d="M0 5h22v14H0z"/><path fill="#3f97dc" d="M4 11h14v8h-3v-4H8v4H4z"/></svg></button>
  <button class="app" aria-label="WhatsApp"><svg width="25" height="25"><path d="M2 23l1.500-6a10.500 10.500 0 1 1 4 4.500z" fill="none" stroke="#35cf65" stroke-width="2"/><path fill="#35cf65" d="M8 7c2-2 3 0 3.500 2 .5 1-1.500 1.500-.5 3s2 2.500 4 3c1 0 1-1.500 2.500-1s3 1.500 1.500 3c-5 4-14-4-11-10z"/></svg><span class="bubble" style="left:29px;top:18px">1</span></button>
  <button class="app run" aria-label="Firefox"><svg width="24" height="24"><defs><linearGradient id="ff" x1="1" y1="0" x2="0" y2="1"><stop offset="0" stop-color="#ffe04a"/><stop offset=".5" stop-color="#ff7f2e"/><stop offset="1" stop-color="#e8286e"/></linearGradient></defs><path fill="url(#ff)" d="M15 0c3 3 8 7 8.500 13A11.500 11 0 1 1 1 11C1 8 2 6 4 4l2 3c2-1 4-1 5 0 0-3 1-6 4-7z"/><circle cx="12" cy="13" r="5" fill="#7a3fe0"/><path fill="#ff9232" d="M6 9c3-2 6 0 8 2-3 0-4 1-3 3l-4 1z"/></svg></button>
  <button class="app" aria-label="MySQL Workbench"><svg width="24" height="24"><rect width="24" height="24" rx="2" fill="#22506f"/><path fill="none" stroke="#a8cfe6" stroke-width="1.300" d="M5 20c-1-4 1-5-1-9S3 4 6 4s7 3 9 8 4 6 6 8l-3-1M16 3l2 4 3-1"/></svg></button>
  <button class="app run now" aria-label="Power BI"><svg width="20" height="25"><path fill="#d9941a" d="M10 0h9v25h-9z"/><path fill="#f0b824" d="M5 6h9v19H5z"/><path fill="#f9dc5c" d="M0 12h8v13H0z"/></svg></button>
  <button class="app" aria-label="Remote desktop"><svg width="22" height="22"><circle cx="11" cy="11" r="11" fill="#2cc077"/><path fill="none" stroke="#d5ffe9" d="M5 5.500h12v9H5zM11 17V9M8.500 11L11 8.500l2.500 2.500M8 17.500h6"/></svg></button>
  <button class="app run" aria-label="ChatGPT"><svg width="24" height="24"><g fill="none" stroke="#eee" stroke-width="1.500"><path id="pet" d="M12 8L6.500 11v-5C7 1 13 0 15.500 3.500L9 7v7"/><use href="#pet" transform="rotate(60 12 12)"/><use href="#pet" transform="rotate(120 12 12)"/><use href="#pet" transform="rotate(180 12 12)"/><use href="#pet" transform="rotate(240 12 12)"/><use href="#pet" transform="rotate(300 12 12)"/></g></svg></button>
  <button class="app run" aria-label="Chat sync"><svg width="24" height="24"><rect width="24" height="24" rx="4" fill="#fff"/><path fill="none" stroke="#2583dc" stroke-width="2.400" d="M5 10c2-6 11-7 14 0v4"/><path fill="none" stroke="#e8513f" stroke-width="2.400" d="M5 12c0 6 6 8 11 6M12 21l4-3"/><path stroke="#2583dc" stroke-width="2" stroke-dasharray="2 1" d="M8 12.500h9"/></svg></button>

  <div class="tray d-flex align-items-center ms-auto">
    <svg width="16" height="16"><path d="M1 15l1-4a7 7 0 1 1 3 3z" fill="none" stroke="#3fd06e" stroke-width="1.300"/><path fill="#3fd06e" d="M5 5c2-2 2 1 2 2s0 1 3 3c1-1 3 0 1 1-3 2-7-2-6-6z"/></svg>
    <svg width="16" height="16"><rect x="1" y="1" width="14" height="14" rx="2" fill="#fff"/><path fill="#222" d="M3 4h11v10H3z"/><path fill="#fff" d="M4 5h9v8H4z"/><text x="8.500" y="13" text-anchor="middle" font-size="10" font-weight="700" fill="#000">N</text></svg>
    <svg width="16" height="16" viewBox="0 0 24 24"><g fill="none" stroke="#080808" stroke-width="1.800"><path d="M12 8L6.500 11v-5C7 1 13 0 15.500 3.500L9 7v7"/><use href="#pet" transform="rotate(60 12 12)"/><use href="#pet" transform="rotate(120 12 12)"/><use href="#pet" transform="rotate(180 12 12)"/><use href="#pet" transform="rotate(240 12 12)"/><use href="#pet" transform="rotate(300 12 12)"/></g></svg>
    <svg width="16" height="16"><circle cx="9" cy="3" r="2.500" fill="#8d94f0"/><circle cx="14" cy="4" r="1.800" fill="#6f77e0"/><path fill="#7a80ea" d="M6 6h10v7c-2 4-8 4-10 1z"/><path fill="#4a50c0" d="M0 5h9v9H0z"/><text x="4.500" y="12.500" text-anchor="middle" font-size="8" font-weight="700" fill="#fff">T</text></svg>
    <svg width="16" height="16" viewBox="0 0 24 24"><rect width="24" height="24" rx="3" fill="#fff"/><path fill="none" stroke="#2583dc" stroke-width="2.400" d="M5 10c2-6 11-7 14 0v4"/><path fill="none" stroke="#e8513f" stroke-width="2.400" d="M5 12c0 6 6 8 11 6"/><path stroke="#2583dc" stroke-width="2" d="M8 12.500h9"/></svg>
    <svg width="16" height="16"><path class="ln" stroke-width="1.200" d="M4 11.500H1.500v-10h10V4M4.500 4.500h10v10h-10z"/></svg>
    <svg width="16" height="16"><path fill="#1d77c2" d="M1 2h14v9l-7 3-7-3z"/><path fill="#45b5f0" d="M1 2h10v9H1z"/></svg>
    <svg width="16" height="16"><ellipse cx="8" cy="8" rx="8" ry="5.500" fill="#c8751c"/><path fill="#6a5a24" d="M8 13c5 1 8-2 8-5L9 9z"/><path fill="#a5601c" d="M0 8c0-3 5-6 9-5L8 8z"/></svg>
    <svg width="16" height="16"><path fill="#909090" d="M1 1h14v9H1zM1 12h8v3H1zM11 12h4v3h-4z"/></svg>
    <svg width="16" height="16"><circle cx="9" cy="6" r="6" fill="#3484d0"/><path fill="#4fb33a" d="M9 0c5 0 6 4 6 7L9 6z"/><path fill="#f2d22e" d="M4 3c5 0 6 3 4 7H3z"/><path fill="#48a830" d="M0 9l8-1v3h5c-1 3-10 4-13-2z"/></svg>
    <svg width="16" height="16"><path fill="#bcbcbc" d="M0 4l4-3h12l-2 11H0z"/><path fill="#8b8b8b" d="M0 6h14v4H0z"/><path fill="none" stroke="#3cc83c" stroke-width="2.500" d="M6 10l3 4 6-9"/></svg>
    <svg width="16" height="16"><rect width="16" height="16" rx="2" fill="#3b9de0"/><path fill="none" stroke="#d5eefc" d="M3 3h10v5H4v5h9M6 5h4M7 10h6"/></svg>
    <svg width="16" height="16"><path fill="#fff" d="M8 0l7 2v6c0 4-4 7-7 8-3-1-7-4-7-8V2z"/><path stroke="#222" stroke-width="1.200" d="M8 0v16M1 7h14"/><circle cx="12" cy="12" r="4" fill="#14a05a"/><path fill="none" stroke="#fff" stroke-width="1.200" d="M10 12l1.500 1.500L14 11"/></svg>
    <svg width="16" height="16"><path class="ln" d="M2.500 4.500h8v7h-8zM10.500 8l3-2.500v5zM3 2c2-2 6-2 8 0M3 14c2 2 6 2 8 0"/></svg>
    <svg width="16" height="16"><path class="ln" stroke-width="1.300" d="M1 4.500h12v7H1zM14.500 6.500v3"/><path class="wf" d="M3 6.500h5v3H3z"/></svg>
    <svg width="16" height="16"><path class="ln" d="M2 14C2 8 7 3 13 3M5 14c0-4 4-8 8-8M8 14c0-2 2-5 5-5"/><circle cx="12" cy="13" r="1.500" fill="#fff"/></svg>
    <svg width="17" height="16"><path class="ln" d="M.5 5.500h3L7 2v12l-3.500-3.500h-3zM9 6c1.500 1 1.500 3 0 4M11 4c3 2 3 6 0 8M13.500 2c4 3 4 9 0 12"/></svg>
  </div>
  <button class="ms-2 ps-1" style="font:14px 'DejaVu Sans',sans-serif;width:24px" lang="ar">ع</button>
  <div class="clock ms-2">4:34 PM<br>4/11/2026</div>
  <button class="position-relative" style="margin-left:14px;margin-right:20px" aria-label="Notifications"><svg width="17" height="17"><path fill="#fff" d="M0 0h16v13h-5v4l-4-4H0z"/><path stroke="#333" d="M3 3.500h10M3 6.500h10M3 9.500h6"/></svg><span class="bubble" style="left:8px;top:8px">1</span></button>
  <div class="align-self-stretch" style="width:4px;border-left:1px solid #666"></div>
</footer>

<div class="watermark"><div class="ar" lang="ar" dir="rtl">نفذلي</div><div class="en">nafezly.com</div></div>
<script src="https://cdn.jsdelivr.net/npm/bootstrap@5.3.0/dist/js/bootstrap.bundle.min.js"></script>
</body>
</html>
